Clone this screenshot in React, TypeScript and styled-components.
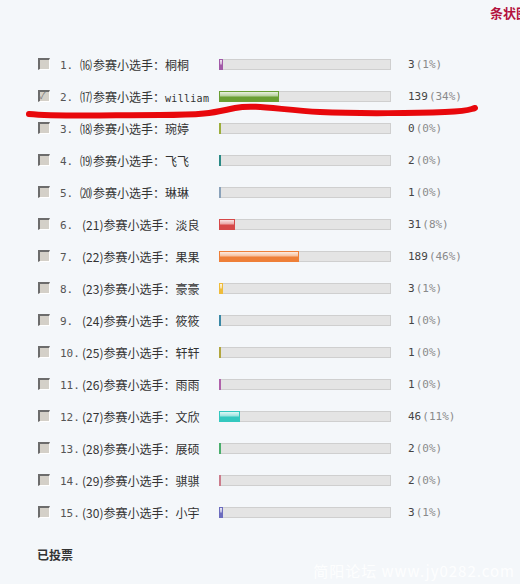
import * as React from "react";
import styled, {createGlobalStyle} from "styled-components";

const Global = createGlobalStyle`
  html, body {
    margin: 0;
    padding: 0;
    background: #f4f7fa;
  }
  body {
    font-family: "Noto Sans CJK SC", "DejaVu Sans", sans-serif;
    font-size: 12px;
    color: #333;
  }
`;

const Page = styled.div`
  position: relative;
  width: 520px;
  height: 584px;
  overflow: hidden;
`;

const Header = styled.div`
  height: 48px;
  padding-left: 490px;
  box-sizing: border-box;
  white-space: nowrap;
`;

const Title = styled.div`
  padding-top: 4px;
  color: #b3123e;
  font-weight: bold;
  font-size: 13px;
  line-height: 18px;
`;

const List = styled.ul`
  list-style: none;
  margin: 0;
  padding: 0;
`;

const Row = styled.li`
  display: grid;
  grid-template-columns: 38px 12px 10px 20px 139px 172px 17px 1fr;
  align-items: center;
  height: 32px;
`;

const Check = styled.span<{ checked: boolean }>`
  grid-column: 2;
  box-sizing: border-box;
  width: 12px;
  height: 12px;
  background: #d4d0c8;
  border-top: 2px solid #6c6c6c;
  border-left: 2px solid #6c6c6c;
  border-right: 1px solid #fff;
  border-bottom: 1px solid #fff;
  position: relative;
  &::after {
    content: ${({checked}) => checked ? '"✓"' : '""'};
    position: absolute;
    left: -1px;
    top: -5px;
    font-size: 10px;
    color: #7a7a7a;
  }
`;

const Num = styled.span`
  grid-column: 4;
  color: #555;
  font-size: 11px;
  padding-top: 2px;
  font-family: "DejaVu Sans Mono", monospace;
`;

const Label = styled.span`
  grid-column: 5;
  white-space: nowrap;
  color: #333;
  font-size: 12px;
`;

const Tag = styled.span<{ wide: boolean }>`
  display: inline-block;
  width: ${({wide}) => wide ? "auto" : "13px"};
  margin-left: ${({wide}) => wide ? "2px" : "0"};
`;

const Latin = styled.span`
  font-family: "DejaVu Sans Mono", monospace;
  font-size: 10px;
  letter-spacing: 0.3px;
`;

const Track = styled.div`
  grid-column: 6;
  box-sizing: border-box;
  height: 11px;
  background: #e4e4e4;
  border: 1px solid #cfcfcf;
  border-left: none;
  display: flex;
`;

const Fill = styled.div<{ color: string }>`
  box-sizing: border-box;
  height: 11px;
  margin-top: -1px;
  border: 1px solid ${({color}) => color};
  background: linear-gradient(
    to bottom,
    rgba(255, 255, 255, 0.85) 0%,
    rgba(255, 255, 255, 0.5) 45%,
    ${({color}) => color} 55%,
    ${({color}) => color} 100%
  ), ${({color}) => color};
`;

const Count = styled.span`
  grid-column: 8;
  font-family: "DejaVu Sans Mono", monospace;
  font-size: 11px;
  color: #444;
  white-space: nowrap;
`;

const Pct = styled.span`
  color: #8a8a8a;
  margin-left: 1px;
`;

const Voted = styled.div`
  margin: 18px 0 0 37px;
  font-weight: bold;
  font-size: 12px;
  color: #333;
`;

const Scribble = styled.svg`
  position: absolute;
  left: 0;
  top: 0;
  pointer-events: none;
`;

const Watermark = styled.div`
  position: absolute;
  right: 5px;
  bottom: 3px;
  color: rgba(255, 255, 255, 0.9);
  font-size: 15px;
  letter-spacing: 1px;
  font-family: "Noto Sans CJK SC", "DejaVu Sans", sans-serif;
`;

const rows = [
  {n: "1.", tag: "⒃", name: "桐桐", votes: 3, pct: 1, w: 4, color: "#a25aa8"},
  {n: "2.", tag: "⒄", name: "william", votes: 139, pct: 34, w: 60, color: "#6a9f34"},
  {n: "3.", tag: "⒅", name: "琬婷", votes: 0, pct: 0, w: 2, color: "#9cae3c"},
  {n: "4.", tag: "⒆", name: "飞飞", votes: 2, pct: 0, w: 2, color: "#2a8a86"},
  {n: "5.", tag: "⒇", name: "琳琳", votes: 1, pct: 0, w: 2, color: "#8aa2ba"},
  {n: "6.", tag: "(21)", name: "淡良", votes: 31, pct: 8, w: 16, color: "#d64848"},
  {n: "7.", tag: "(22)", name: "果果", votes: 189, pct: 46, w: 80, color: "#ee7f38"},
  {n: "8.", tag: "(23)", name: "豪豪", votes: 3, pct: 1, w: 4, color: "#efbc3a"},
  {n: "9.", tag: "(24)", name: "筱筱", votes: 1, pct: 0, w: 2, color: "#3a88a6"},
  {n: "10.", tag: "(25)", name: "轩轩", votes: 1, pct: 0, w: 2, color: "#b2a63e"},
  {n: "11.", tag: "(26)", name: "雨雨", votes: 1, pct: 0, w: 2, color: "#b062aa"},
  {n: "12.", tag: "(27)", name: "文欣", votes: 46, pct: 11, w: 21, color: "#34c8bf"},
  {n: "13.", tag: "(28)", name: "展硕", votes: 2, pct: 0, w: 2, color: "#4aae6c"},
  {n: "14.", tag: "(29)", name: "骐骐", votes: 2, pct: 0, w: 2, color: "#cc7c8c"},
  {n: "15.", tag: "(30)", name: "小宇", votes: 3, pct: 1, w: 4, color: "#6c6cbe"},
];

export default function App() {
  return (
    <Page>
      <Global/>
      <Header>
        <Title>条状图</Title>
      </Header>
      <List>
        {rows.map((r, i) => (
          <Row key={i}>
            <Check checked={i === 1}/>
            <Num>{r.n}</Num>
            <Label>
              <Tag wide={r.tag.length > 1}>{r.tag}</Tag>参赛小选手：
              {/^[a-z]+$/.test(r.name) ? <Latin>{r.name}</Latin> : r.name}
            </Label>
            <Track>
              <Fill color={r.color} style={{width: r.w}}/>
            </Track>
            <Count>{r.votes}<Pct>({r.pct}%)</Pct></Count>
          </Row>
        ))}
      </List>
      <Voted>已投票</Voted>
      <Scribble width="520" height="584" viewBox="0 0 520 584">
        <path
          d="M29 114 C 60 117, 110 115, 160 115 S 215 112, 235 108 S 280 110, 320 112 S 420 113, 445 112 S 468 110, 475 108"
          fill="none"
          stroke="#e8080c"
          strokeWidth="6"
          strokeLinecap="round"
        />
      </Scribble>
      <Watermark>简阳论坛 www.jy0282.com</Watermark>
    </Page>
  );
}
